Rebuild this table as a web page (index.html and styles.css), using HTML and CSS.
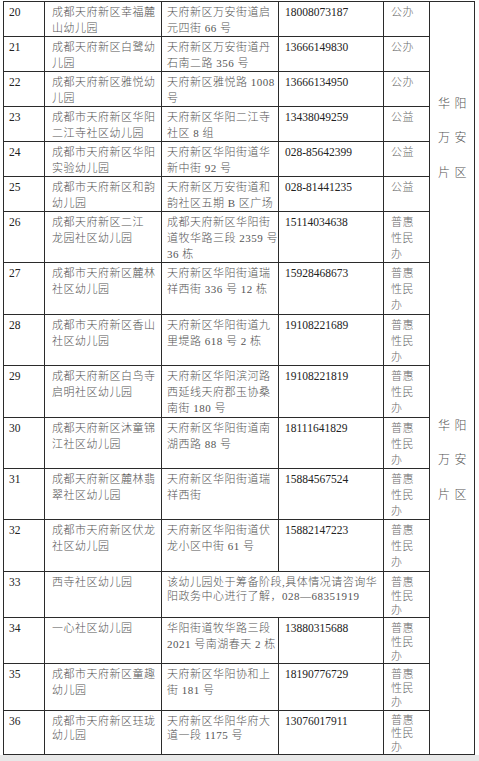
FILE: index.html
```html
<!DOCTYPE html>
<html lang="zh-CN">
<head>
<meta charset="utf-8">
<title>幼儿园名单</title>
<link rel="stylesheet" href="styles.css">
</head>
<body>
<div class="page">
<table class="sheet">
<colgroup>
<col class="c-no"><col class="c-name"><col class="c-addr"><col class="c-tel"><col class="c-type"><col class="c-area">
</colgroup>
<tbody>
<tr class="h2">
<td class="no">20</td>
<td class="name">成都天府新区幸福麓<br>山幼儿园</td>
<td class="addr">天府新区万安街道启<br>元四街 66 号</td>
<td class="tel">18008073187</td>
<td class="type">公办</td>
<td class="area" rowspan="17">
<div class="area-block first">华阳<br>万安<br>片区</div>
<div class="area-block second">华阳<br>万安<br>片区</div>
</td>
</tr>
<tr class="h2">
<td class="no">21</td>
<td class="name">成都天府新区白鹭幼<br>儿园</td>
<td class="addr">天府新区万安街道丹<br>石南二路 356 号</td>
<td class="tel">13666149830</td>
<td class="type">公办</td>
</tr>
<tr class="h2">
<td class="no">22</td>
<td class="name">成都天府新区雅悦幼<br>儿园</td>
<td class="addr">天府新区雅悦路 1008<br>号</td>
<td class="tel">13666134950</td>
<td class="type">公办</td>
</tr>
<tr class="h2">
<td class="no">23</td>
<td class="name">成都市天府新区华阳<br>二江寺社区幼儿园</td>
<td class="addr">天府新区华阳二江寺<br>社区 8 组</td>
<td class="tel">13438049259</td>
<td class="type">公益</td>
</tr>
<tr class="h2">
<td class="no">24</td>
<td class="name">成都市天府新区华阳<br>实验幼儿园</td>
<td class="addr">天府新区华阳街道华<br>新中街 92 号</td>
<td class="tel">028-85642399</td>
<td class="type">公益</td>
</tr>
<tr class="h2">
<td class="no">25</td>
<td class="name">成都市天府新区和韵<br>幼儿园</td>
<td class="addr">天府新区万安街道和<br>韵社区五期 B 区广场</td>
<td class="tel">028-81441235</td>
<td class="type">公益</td>
</tr>
<tr class="h3">
<td class="no">26</td>
<td class="name">成都天府新区二江<br>龙园社区幼儿园</td>
<td class="addr">成都天府新区华阳街<br>道牧华路三段 2359 号<br>36 栋</td>
<td class="tel">15114034638</td>
<td class="type">普惠<br>性民<br>办</td>
</tr>
<tr class="h3">
<td class="no">27</td>
<td class="name">成都市天府新区麓林<br>社区幼儿园</td>
<td class="addr">天府新区华阳街道瑞<br>祥西街 336 号 12 栋</td>
<td class="tel">15928468673</td>
<td class="type">普惠<br>性民<br>办</td>
</tr>
<tr class="h3">
<td class="no">28</td>
<td class="name">成都市天府新区香山<br>社区幼儿园</td>
<td class="addr">天府新区华阳街道九<br>里堤路 618 号 2 栋</td>
<td class="tel">19108221689</td>
<td class="type">普惠<br>性民<br>办</td>
</tr>
<tr class="h3">
<td class="no">29</td>
<td class="name">成都天府新区白鸟寺<br>启明社区幼儿园</td>
<td class="addr">天府新区华阳滨河路<br>西延线天府郡玉协桑<br>南街 180 号</td>
<td class="tel">19108221819</td>
<td class="type">普惠<br>性民<br>办</td>
</tr>
<tr class="h3">
<td class="no">30</td>
<td class="name">成都天府新区沐童锦<br>江社区幼儿园</td>
<td class="addr">天府新区华阳街道南<br>湖西路 88 号</td>
<td class="tel">18111641829</td>
<td class="type">普惠<br>性民<br>办</td>
</tr>
<tr class="h3">
<td class="no">31</td>
<td class="name">成都天府新区麓林翡<br>翠社区幼儿园</td>
<td class="addr">天府新区华阳街道瑞<br>祥西街</td>
<td class="tel">15884567524</td>
<td class="type">普惠<br>性民<br>办</td>
</tr>
<tr class="h3">
<td class="no">32</td>
<td class="name">成都市天府新区伏龙<br>社区幼儿园</td>
<td class="addr">天府新区华阳街道伏<br>龙小区中街 61 号</td>
<td class="tel">15882147223</td>
<td class="type">普惠<br>性民<br>办</td>
</tr>
<tr class="h3b tight">
<td class="no">33</td>
<td class="name">西寺社区幼儿园</td>
<td class="addr" colspan="2">该幼儿园处于筹备阶段,具体情况请咨询华<br>阳政务中心进行了解，028—68351919</td>
<td class="type">普惠<br>性民<br>办</td>
</tr>
<tr class="h3b mid">
<td class="no">34</td>
<td class="name">一心社区幼儿园</td>
<td class="addr">华阳街道牧华路三段<br>2021 号南湖春天 2 栋</td>
<td class="tel">13880315688</td>
<td class="type">普惠<br>性民<br>办</td>
</tr>
<tr class="h3c mid">
<td class="no">35</td>
<td class="name">成都市天府新区童趣<br>幼儿园</td>
<td class="addr">天府新区华阳协和上<br>街 181 号</td>
<td class="tel">18190776729</td>
<td class="type">普惠<br>性民<br>办</td>
</tr>
<tr class="hlast tight last">
<td class="no">36</td>
<td class="name">成都市天府新区珏珑<br>幼儿园</td>
<td class="addr">天府新区华阳华府大<br>道一段 1175 号</td>
<td class="tel">13076017911</td>
<td class="type">普惠<br>性民<br>办</td>
</tr>
</tbody>
</table>
<div class="page-foot"></div>
</div>
</body>
</html>
```

FILE: styles.css
```css
* { box-sizing: border-box; }
html, body { margin: 0; padding: 0; background: #fff; }
body {
  width: 479px;
  height: 761px;
  overflow: hidden;
  font-family: "Liberation Serif", "Noto Sans CJK SC", serif;
  font-size: 11.5px;
  font-weight: 300;
  color: #555;
}
.page { padding: 1px 0 0 3px; }
.sheet {
  border-collapse: collapse;
  table-layout: fixed;
  width: 471px;
}
.c-no { width: 41px; }
.c-name { width: 117px; }
.c-addr { width: 117px; }
.c-tel { width: 105px; }
.c-type { width: 46px; }
.c-area { width: 45px; }

.sheet td {
  border: 1px solid #2b2b2b;
  vertical-align: top;
  padding: 2px 0 0 5px;
  line-height: 16px;
  white-space: nowrap;
  overflow: hidden;
}
.h2 { height: 34.6px; }
.h3 { height: 51.4px; }
.h3b { height: 46px; }
.h3c { height: 47px; }
.hlast { height: 44px; }

.sheet td.no { padding-left: 5px; color: #222; }
.sheet td.name,
.sheet td.addr,
.sheet td.type {
  font-size: 11px;
  letter-spacing: 0.5px;
}
.sheet td.name { padding-left: 7px; }
.sheet td.addr { padding-left: 5px; }
.sheet td.tel { padding-left: 6px; color: #222; }
.sheet td.type { padding-left: 7px; color: #6a6a6a; }

.tight td { line-height: 14px; padding-top: 3px; }
.mid td { line-height: 16px; padding-top: 2px; }
.mid td.type { line-height: 14px; padding-top: 3px; }
.last td.type { line-height: 13.5px; }

.sheet td.area {
  padding: 0 0 0 8px;
  vertical-align: top;
  color: #555;
}
.area-block {
  font-size: 12px;
  letter-spacing: 4.5px;
  line-height: 34.5px;
}
.area-block.first { margin-top: 84.5px; }
.area-block.second { margin-top: 218.5px; }

.page-foot {
  height: 10px;
  margin-left: -3px;
  background: #e8e8e8;
}
```
